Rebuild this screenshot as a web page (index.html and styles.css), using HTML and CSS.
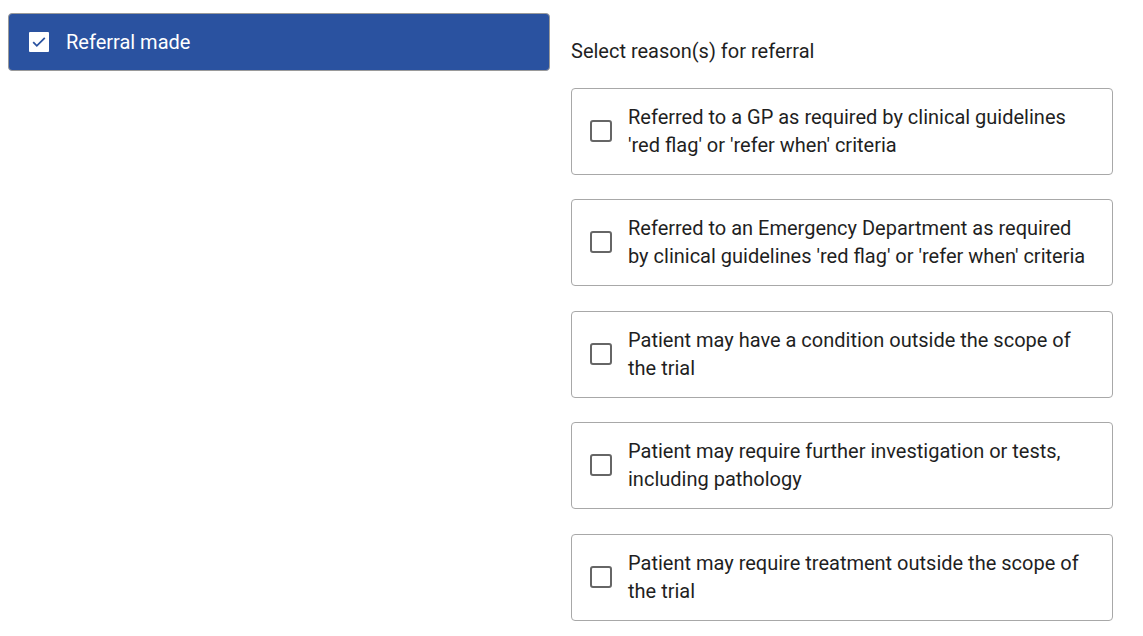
FILE: index.html
```html
<!DOCTYPE html>
<html lang="en">
<head>
  <meta charset="UTF-8" />
  <title>Referral</title>
  <link rel="stylesheet" href="styles.css">
</head>
<body>
  <div class="layout">

    <!-- Referral toggle -->
    <div class="referral">
      <span class="tick">
        <svg width="16" height="16" viewBox="0 0 16 16"><path d="M2.2 8.2l3.6 3.6L13.8 3.8" fill="none" stroke="#2a52a0" stroke-width="1.8"/></svg>
      </span>
      <span>Referral made</span>
    </div>

    <!-- Reasons -->
    <section class="reasons">
      <p class="reasons-title">Select reason(s) for referral</p>
      <label class="option"><span class="box"></span><span>Referred to a GP as required by clinical guidelines 'red flag' or 'refer when' criteria</span></label>
      <label class="option"><span class="box"></span><span>Referred to an Emergency Department as required by clinical guidelines 'red flag' or 'refer when' criteria</span></label>
      <label class="option"><span class="box"></span><span>Patient may have a condition outside the scope of the trial</span></label>
      <label class="option"><span class="box"></span><span>Patient may require further investigation or tests, including pathology</span></label>
      <label class="option"><span class="box"></span><span>Patient may require treatment outside the scope of the trial</span></label>
    </section>

  </div>
</body>
</html>
```

FILE: styles.css
```css
body {
  font-family: Roboto, 'Liberation Sans', sans-serif;
  margin: 0;
  padding: 13px 8px;
  color: #1f1f1f;
  background: #fff;
}

.layout {
  display: grid;
  grid-template-columns: 542px 542px;
  column-gap: 21px;
  align-items: start;
}

.referral {
  display: flex;
  align-items: center;
  gap: 17px;
  height: 56px;
  padding: 0 20px;
  background: #2a52a0;
  border: 1px solid #9a9a9a;
  border-radius: 4px;
  color: #fff;
  font-size: 20px;
}

.tick {
  width: 20px;
  height: 20px;
  background: #fff;
  border-radius: 1px;
  display: flex;
  align-items: center;
  justify-content: center;
}

.reasons {
  display: flex;
  flex-direction: column;
  gap: 24.5px;
}

.reasons-title {
  margin: 24px 0 -2px;
  font-size: 20px;
  line-height: 28px;
}

.option {
  display: flex;
  align-items: center;
  gap: 16px;
  min-height: 56px;
  padding: 14px 20px 15px 18px;
  border: 1px solid #a8a8a8;
  border-radius: 4px;
  font-size: 20px;
  line-height: 28px;
}

.box {
  flex: none;
  width: 18px;
  height: 18px;
  border: 2px solid #666;
  border-radius: 3px;
}
```
